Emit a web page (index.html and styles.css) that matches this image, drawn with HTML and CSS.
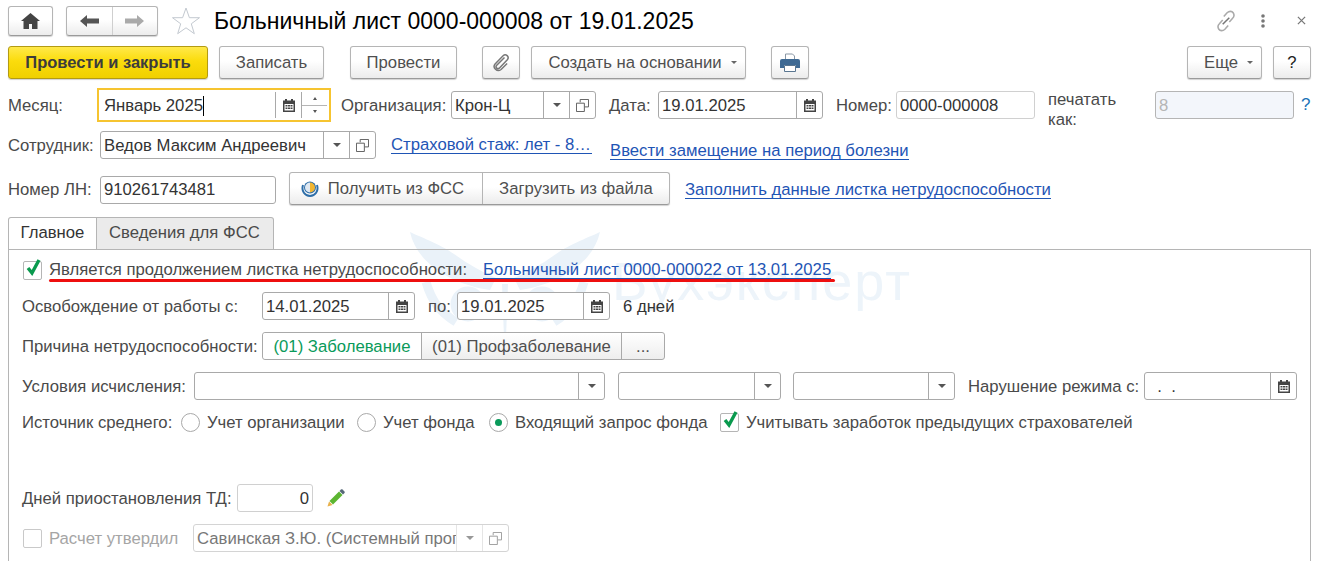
FILE: index.html
```html
<!DOCTYPE html>
<html lang="ru">
<head>
<meta charset="utf-8">
<title>Больничный лист</title>
<link rel="stylesheet" href="styles.css">
</head>
<body>
<svg class="defs" width="0" height="0" aria-hidden="true">
  <defs>
    <symbol id="cal" viewBox="0 0 14 14">
      <path fill="#444" d="M1 2.500h2V1h2v1.500h4V1h2v1.500h2V14H1zM2.500 6v6.500h9V6z"/>
      <path fill="#444" d="M3.500 7h2v1.500h-2zM6 7h2v1.500H6zM8.500 7h2v1.500h-2zM3.500 9.500h2V11h-2zM6 9.500h2V11H6zM8.500 9.500h2V11h-2z"/>
    </symbol>
    <symbol id="open" viewBox="0 0 14 14">
      <path fill="none" stroke="#555" d="M4.500 3.500V.5h9v8h-4M.5 4.500h8.500v9H.5z"/>
    </symbol>
    <symbol id="tick" viewBox="0 0 20 20">
      <path fill="none" stroke="#0a9a4e" stroke-width="3.400" d="M5 10l4 5 7-13"/>
    </symbol>
  </defs>
</svg>

<div class="watermark">
  <svg class="wm-logo" viewBox="0 0 190 110" aria-hidden="true">
    <g fill="#eaf2f9">
      <path d="M0 0c8 4 30 12 44 22 14 10 28 18 42 24l-6 12C50 54 8 36 0 0z"/>
      <path d="M190 0c-8 4-30 12-44 22-14 10-28 18-42 24l6 12c30-4 72-22 80-58z"/>
      <path d="M92 52h6l-2 54h-2z"/>
    </g>
    <g fill="none" stroke="#eaf2f9" stroke-width="9">
      <circle cx="58" cy="72" r="13"/>
      <circle cx="132" cy="72" r="13"/>
      <path d="M16 50c6 20 14 30 30 40M174 50c-6 20-14 30-30 40"/>
    </g>
  </svg>
  <span class="wm-text">Бухэксперт</span>
</div>

<div class="page">
  <header class="row head">
    <button class="btn home" aria-label="Домой">
      <svg width="19" height="16" viewBox="0 0 19 16"><path fill="#444" d="M9.500 0L19 8h-2.500v8H11v-5H8v5H2.500V8H0z"/></svg>
    </button>
    <div class="btn nav">
      <span class="nav-cell nav-back"><svg width="19" height="12" viewBox="0 0 19 12"><path fill="#555" d="M0 6l7-6v3.500h12v5H7V12z"/></svg></span>
      <span class="nav-cell"><svg width="19" height="12" viewBox="0 0 19 12"><path fill="#aaa" d="M19 6l-7-6v3.500H0v5h12V12z"/></svg></span>
    </div>
    <svg class="star" width="30" height="30" viewBox="0 0 30 30"><path fill="#fff" stroke="#c3c9d0" d="M15 2l3.400 9.700h10.100l-8.200 6.100 3 9.900L15 21.800l-8.300 5.900 3-9.900L1.500 11.700h10.100z"/></svg>
    <h1 class="title">Больничный лист 0000-000008 от 19.01.2025</h1>
    <div class="head-tools">
      <svg class="tool-link" width="22" height="22" viewBox="0 0 20 20"><g fill="none" stroke="#aaa" stroke-width="1.400"><path d="M8 6l3-3.500c2-1.800 4.500-1.500 5.500 0s1 3.500-.5 5L13 11"/><path d="M12 14l-3 3.500c-2 1.800-4.500 1.500-5.500 0s-1-3.500.5-5L7 9"/><path stroke="#777" d="M7 13l6-6"/></g></svg>
      <svg class="tool-more" width="4" height="14" viewBox="0 0 4 14"><g fill="#777"><circle cx="2" cy="2" r="1.800"/><circle cx="2" cy="7" r="1.800"/><circle cx="2" cy="12" r="1.800"/></g></svg>
      <svg class="tool-close" width="9" height="9" viewBox="0 0 10 10"><path stroke="#777" stroke-width="1.400" d="M1 1l8 8M9 1l-8 8"/></svg>
    </div>
  </header>

  <div class="row toolbar">
    <button class="btn primary w200">Провести и закрыть</button>
    <button class="btn w105 ml11">Записать</button>
    <button class="btn w107 ml26">Провести</button>
    <button class="btn w38 ml25" aria-label="Файлы">
      <svg width="20" height="20" viewBox="0 0 20 20"><path fill="none" stroke="#777" stroke-width="1.500" d="M13.500 4.500l-8 8c-1.500 2 1 4.200 2.800 2.700l8-8.500c2.500-3-1.500-6.500-4.200-4l-8 8.300c-3 3.800 2 8.500 6 5.500l6-6"/></svg>
    </button>
    <button class="btn w215 ml11 pl8">Создать на основании<i class="caret caret-btn"></i></button>
    <button class="btn w38 ml25" aria-label="Печать">
      <svg width="20" height="19" viewBox="0 0 20 19"><path fill="#fff" stroke="#8a97a5" d="M5.500 7V1h7l2 2v4z"/><path fill="#3f6a94" d="M2 6h16a2 2 0 0 1 2 2v7h-4v-3H4v3H0V8a2 2 0 0 1 2-2z"/><path fill="#fff" stroke="#5a7690" d="M4.500 12.500h11v6h-11z"/></svg>
    </button>
    <span class="grow"></span>
    <button class="btn w75 pl8">Еще<i class="caret caret-btn"></i></button>
    <button class="btn w38 ml11 dark">?</button>
  </div>

  <div class="row r-main">
    <label class="lbl w89">Месяц:</label>
    <div class="focus">
      <div class="focus-val"><span>Январь 2025</span><i class="cursor"></i></div>
      <span class="cell"><svg width="14" height="14"><use href="#cal"/></svg></span>
      <span class="spin"><i class="up"></i><i class="down"></i></span>
    </div>
    <label class="lbl ml10 w110">Организация:</label>
    <div class="field w145"><span class="val">Крон-Ц</span><span class="cell"><i class="caret"></i></span><span class="cell"><svg width="13" height="13"><use href="#open"/></svg></span></div>
    <label class="lbl ml13 w49">Дата:</label>
    <div class="field w165"><span class="val">19.01.2025</span><span class="cell"><svg width="14" height="14"><use href="#cal"/></svg></span></div>
    <label class="lbl ml13 w60">Номер:</label>
    <div class="field w139 light"><span class="val">0000-000008</span></div>
    <label class="lbl ml13 w107 two">печатать как:</label>
    <div class="field w139 disabled"><span class="val">8</span></div>
    <a class="help">?</a>
  </div>

  <div class="row r-emp">
    <label class="lbl w92">Сотрудник:</label>
    <div class="field w276"><span class="val">Ведов Максим Андреевич</span><span class="cell"><i class="caret"></i></span><span class="cell"><svg width="13" height="13"><use href="#open"/></svg></span></div>
    <a class="link ml15 w201">Страховой стаж: лет - 8…</a>
    <a class="link ml18 shift6">Ввести замещение на период болезни</a>
  </div>

  <div class="row r-ln">
    <label class="lbl w92">Номер ЛН:</label>
    <div class="field w176"><span class="val">910261743481</span></div>
    <div class="btn group ml13">
      <span class="g-cell g1">
        <svg width="20" height="20" viewBox="0 0 20 20"><path fill="none" stroke="#2e6ea8" stroke-width="2" d="M3 6c-2 6 2 11 7 11s9-5 7-11"/><circle cx="10" cy="8.500" r="6" fill="#2e6ea8"/><path fill="#f2b632" d="M10 3.500a5 5 0 0 1 0 10z"/><path fill="#dfe8f2" d="M10 3.500a5 5 0 0 0 0 10z"/></svg>
        Получить из ФСС
      </span>
      <span class="g-cell g2">Загрузить из файла</span>
    </div>
    <a class="link ml15">Заполнить данные листка нетрудоспособности</a>
  </div>

  <div class="tabs">
    <span class="tab active">Главное</span>
    <span class="tab">Сведения для ФСС</span>
  </div>

  <section class="panel">
    <div class="p-row p-check">
      <span class="check"><svg width="20" height="20"><use href="#tick"/></svg></span>
      <span class="lbl ml7">Является продолжением листка нетрудоспособности:</span>
      <a class="link ml16">Больничный лист 0000-000022 от 13.01.2025</a>
      <i class="redline"></i>
    </div>

    <div class="p-row p-dates">
      <span class="lbl w240">Освобождение от работы с:</span>
      <div class="field w153"><span class="val">14.01.2025</span><span class="cell"><svg width="14" height="14"><use href="#cal"/></svg></span></div>
      <span class="lbl ml13 w29">по:</span>
      <div class="field w153"><span class="val">19.01.2025</span><span class="cell"><svg width="14" height="14"><use href="#cal"/></svg></span></div>
      <span class="plain ml13">6 дней</span>
    </div>

    <div class="p-row p-next">
      <span class="lbl w240">Причина нетрудоспособности:</span>
      <div class="btn seg">
        <span class="s-cell s-on">(01) Заболевание</span>
        <span class="s-cell s2">(01) Профзаболевание</span>
        <span class="s-cell s3">...</span>
      </div>
    </div>

    <div class="p-row p-next">
      <span class="lbl w172">Условия исчисления:</span>
      <div class="field w411"><span class="val"></span><span class="cell"><i class="caret"></i></span></div>
      <div class="field w163 ml13"><span class="val"></span><span class="cell"><i class="caret"></i></span></div>
      <div class="field w162 ml12"><span class="val"></span><span class="cell"><i class="caret"></i></span></div>
      <span class="lbl ml13 w176">Нарушение режима с:</span>
      <div class="field w153"><span class="val">&nbsp;&nbsp;.&nbsp;&nbsp;.</span><span class="cell"><svg width="14" height="14"><use href="#cal"/></svg></span></div>
    </div>

    <div class="p-row p-src">
      <span class="lbl w159">Источник среднего:</span>
      <span class="radio"></span><span class="lbl ml7 w136">Учет организации</span>
      <span class="radio ml14"></span><span class="lbl ml7 w106">Учет фонда</span>
      <span class="radio on"></span><span class="lbl ml7 w205">Входящий запрос фонда</span>
      <span class="check"><svg width="20" height="20"><use href="#tick"/></svg></span>
      <span class="lbl ml7">Учитывать заработок предыдущих страхователей</span>
    </div>

    <div class="p-row p-days">
      <span class="lbl w215">Дней приостановления ТД:</span>
      <div class="field w76 light"><span class="val right">0</span></div>
      <svg class="pencil" width="18" height="18" viewBox="0 0 18 18"><path fill="#5cb531" d="M12 2.500l3.500 3.500L6 15.500 2.500 12z"/><path fill="#566878" d="M12.500 2L14 .5c.5-.4 1-.4 1.500 0l2 2c.4.500.4 1 0 1.500L16 5.500z"/><path fill="#e8b04a" d="M2 12.500L5.500 16 .5 17.500z"/></svg>
    </div>

    <div class="p-row p-calc">
      <span class="check off"></span>
      <span class="lbl ml7 muted w144">Расчет утвердил</span>
      <div class="field w316 faded"><span class="val clip">Савинская З.Ю. (Системный программист)</span><span class="cell"><i class="caret"></i></span><span class="cell"><svg width="13" height="13"><use href="#open"/></svg></span></div>
    </div>
  </section>
</div>
</body>
</html>
```
FILE: styles.css
```css
* { box-sizing: border-box; }
html, body { margin: 0; height: 561px; overflow: hidden; background: #fff; }
body { position: relative; font: 16.7px/20px "Liberation Sans", Arial, sans-serif; color: #4a4a4a; }
.defs { position: absolute; }
.page { position: relative; padding: 0 9px 0 8px; height: 561px; overflow: hidden; }
.row { display: flex; align-items: center; }
.grow { flex: 1; }

.btn {
  display: flex; align-items: center; justify-content: center; padding: 0;
  font: inherit; color: #4f4f4f; height: 33px;
  background: linear-gradient(#fff 0%, #fff 45%, #ececec 100%);
  border: 1px solid #b5b5b5; border-bottom-color: #9a9a9a; border-radius: 3px;
  box-shadow: 0 1px 1px rgba(0,0,0,.18);
}
.pl8 { padding-left: 8px; }
.head { height: 36px; padding-top: 5px; margin-bottom: 10px; }
.home { width: 45px; height: 30px; }
.nav { width: 92px; height: 30px; margin-left: 13px; }
.nav-cell { flex: 1; height: 100%; display: flex; align-items: center; justify-content: center; }
.nav-back { border-right: 1px solid #cfcfcf; }
.star { margin-left: 13px; }
.title { margin: 0 0 0 13px; font-size: 23px; line-height: 30px; font-weight: 400; color: #000; }
.head-tools { margin-left: auto; display: flex; align-items: center; }
.tool-link { margin-right: 24px; }
.tool-more { margin-right: 32px; }
.tool-close { margin-right: 5px; }

.toolbar { height: 33px; margin-bottom: 12px; }
.primary {
  font-weight: 700; color: #3c3c3c; font-size: 16.5px; padding-bottom: 2px;
  background: linear-gradient(#ffe94a 0%, #fbdc0c 45%, #f0d000 100%);
  border-color: #b39b13; 
}
.dark { color: #222; }

.w29 { width: 29px; } .w38 { width: 38px; } .w49 { width: 49px; } .w60 { width: 60px; }
.w75 { width: 75px; } .w76 { width: 76px; } .w89 { width: 89px; } .w92 { width: 92px; }
.w105 { width: 105px; } .w106 { width: 106px; } .w107 { width: 107px; } .w110 { width: 110px; }
.w136 { width: 136px; } .w139 { width: 139px; } .w144 { width: 144px; } .w145 { width: 145px; }
.w153 { width: 153px; } .w159 { width: 159px; } .w162 { width: 162px; } .w163 { width: 163px; }
.w165 { width: 165px; } .w172 { width: 172px; } .w176 { width: 176px; } .w205 { width: 205px; }
.w200 { width: 200px; } .w201 { width: 201px; } .w215 { width: 215px; } .w240 { width: 240px; }
.w276 { width: 276px; } .w316 { width: 316px; } .w411 { width: 411px; }
.ml7 { margin-left: 7px; } .ml10 { margin-left: 10px; } .ml11 { margin-left: 11px; }
.ml12 { margin-left: 12px; } .ml13 { margin-left: 13px; } .ml14 { margin-left: 14px; }
.ml15 { margin-left: 15px; } .ml16 { margin-left: 16px; } .ml18 { margin-left: 18px; } .ml25 { margin-left: 25px; } .ml26 { margin-left: 26px; }

.caret { display: inline-block; width: 0; height: 0; border: 4px solid transparent; border-top: 4px solid #555; border-bottom: 0; }
.caret-btn { margin-left: 9px; border-width: 3px; border-top-color: #666; border-bottom: 0; }

.lbl { flex: none; color: #4a4a4a; white-space: nowrap; padding-top: 2px; }
.plain { color: #333; padding-top: 2px; }
.two { white-space: normal; width: 107px; line-height: 20px; padding-right: 20px; padding-top: 10px; }
.field {
  flex: none; display: flex; height: 28px; background: #fff;
  border: 1px solid #a9a9a9; border-radius: 3px; color: #333;
}
.val { flex: 1; min-width: 0; padding-left: 3px; line-height: 28px; white-space: nowrap; }
.val.right { text-align: right; padding-right: 3px; }
.val.clip { overflow: hidden; }
.cell { flex: none; width: 26px; display: flex; align-items: center; justify-content: center; border-left: 1px solid #a9a9a9; }
.light { border-color: #d0d0d0; }
.disabled { background: #f3f6fb; border-color: #b5b5b5; }
.disabled .val { color: #b5b5b5; }
.faded { border-color: #d4d4d4; }
.faded .val { color: #777; }
.faded .cell { border-color: #d4d4d4; opacity: .6; }

.r-main { height: 34px; margin-top: -3px; }
.focus { flex: none; width: 234px; height: 34px; display: flex; padding: 2px; border: 2px solid #f6c430; background: #fff; color: #333; }
.focus .cell, .focus .spin { height: 26px; align-self: center; }
.focus-val { flex: 1; padding: 2px 0 0 3px; line-height: 26px; display: flex; align-items: center; }
.cursor { display: block; width: 1px; height: 20px; background: #000; }
.spin { flex: none; width: 26px; display: flex; flex-direction: column; align-items: center; justify-content: space-around; border-left: 1px solid #a9a9a9; position: relative; }
.spin::after { content: ""; position: absolute; left: 0; right: 0; top: 13px; border-top: 1px solid #b5b5b5; }
.spin .up { width: 0; height: 0; border: 2px solid transparent; border-bottom: 3px solid #555; border-top: 0; }
.spin .down { width: 0; height: 0; border: 2px solid transparent; border-top: 3px solid #555; border-bottom: 0; }
.help { flex: none; margin-left: 7px; color: #1a73b8; font-size: 17px; }

.r-emp { height: 28px; margin-top: 9px; }
.link { flex: none; color: #1f55b5; text-decoration: none; border-bottom: 1px solid #1f55b5; line-height: 17px; white-space: nowrap; }
.shift6 { transform: translateY(6px); }
.r-ln { height: 33px; margin-top: 13px; }
.r-ln .field, .r-ln .link { margin-top: 2px; }
.r-ln .val { line-height: 26px; }
.group { width: 381px; }
.g-cell { height: 100%; display: flex; align-items: center; justify-content: center; }
.g1 { width: 193px; gap: 8px; padding-right: 8px; border-right: 1px solid #b5b5b5; }
.g2 { flex: 1; }

.tabs { display: flex; height: 33px; margin-top: 12px; position: relative; z-index: 1; margin-bottom: -1px; }
.tab { height: 33px; padding: 0 13px 0 12px; line-height: 29px; border: 1px solid #b5b5b5; border-left: 0; background: #ebebeb; border-radius: 0 3px 0 0; }
.tab.active { width: 89px; padding: 0; text-align: center; background: transparent; border-left: 1px solid #b5b5b5; border-bottom-color: transparent; border-radius: 3px 0 0 0; color: #333; }
.panel { height: 400px; border: 1px solid #b5b5b5; border-bottom: 0; padding-left: 13px; }
.p-row { display: flex; align-items: center; height: 28px; position: relative; }
.p-check { margin-top: 8px; height: 24px; }
.p-check .lbl { padding-top: 0; }
.p-check .check, .p-calc .check { margin-left: 1px; }
.p-dates { margin-top: 10px; }
.p-next { margin-top: 12px; }
.p-src { margin-top: 8px; }
.p-days { margin-top: 48px; }
.p-calc { margin-top: 12px; }

.check { flex: none; width: 19px; height: 19px; border: 1px solid #b5b5b5; border-radius: 2px; position: relative; background: #fff; }
.check svg { position: absolute; left: -1px; top: -4px; overflow: visible; }
.check.off { border-color: #c9c9c9; }
.muted { color: #a5a5a5; }
.redline { position: absolute; left: 27px; top: 21px; width: 786px; height: 3px; background: #ee0f0f; border-radius: 2px; }

.seg { width: 403px; height: 28px; background: linear-gradient(#fff, #eee); box-shadow: none; border-color: #a9a9a9; }
.s-cell { height: 100%; display: flex; align-items: center; justify-content: center; padding-top: 2px; }
.s-on { width: 159px; background: #fff; color: #0a9a5a; border-right: 1px solid #a9a9a9; border-radius: 3px 0 0 3px; }
.s2 { width: 200px; border-right: 1px solid #a9a9a9; }
.s3 { flex: 1; }

.radio { flex: none; width: 19px; height: 19px; border: 1px solid #a9a9a9; border-radius: 50%; position: relative; background: #fff; }
.radio.on::after { content: ""; position: absolute; left: 5px; top: 5px; width: 7px; height: 7px; border-radius: 50%; background: #0a9a5a; }
.pencil { margin-left: 14px; }

.watermark { position: absolute; left: 410px; top: 232px; display: flex; pointer-events: none; }
.wm-logo { width: 190px; height: 110px; }
.wm-text { position: absolute; left: 202px; top: 22px; font-size: 54px; line-height: 54px; letter-spacing: 2px; color: #edf4fa; white-space: nowrap; }
```
